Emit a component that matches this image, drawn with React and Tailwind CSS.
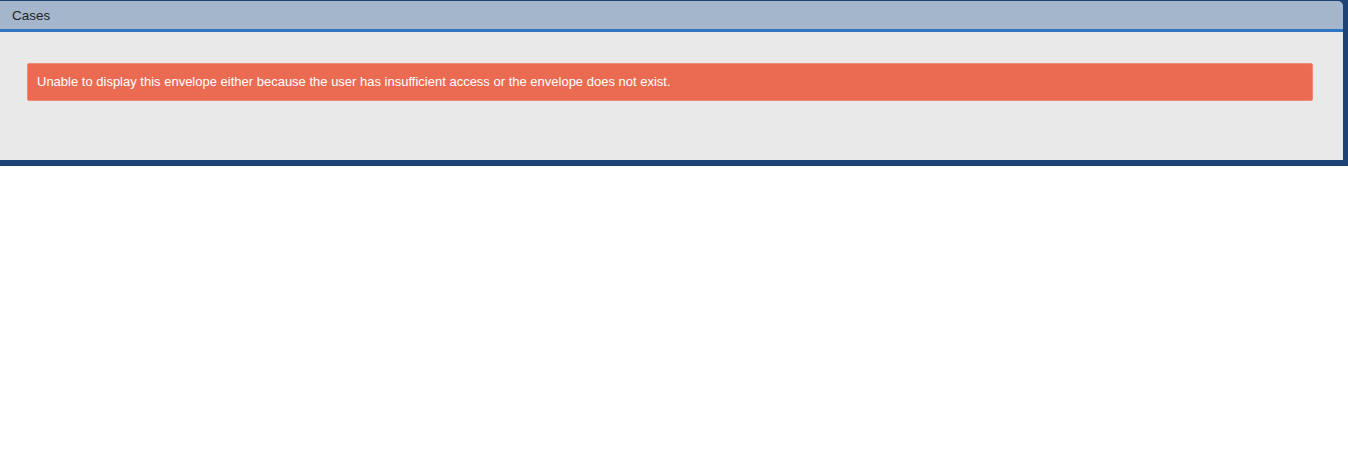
export default function App() {
  return (
    <div className="w-[1348px] bg-white" style={{ fontFamily: '"Liberation Sans", Arial, sans-serif' }}>
      <div className="bg-[#1d4274] pt-px pr-[5px] pb-[6px]">
        <div className="h-[28px] bg-[#a4b6cc] rounded-tr-[5px] flex items-center pl-[12px] pt-[2px] text-[13.5px] text-[#222]">
          Cases
        </div>
        <div className="h-[3px] bg-[#3074c2]" />
        <div className="bg-[#e9e9e9] h-[128px] pt-[31px] pl-[27px] pr-[30px]">
          <div className="h-[38px] bg-[#eb6b52] border border-[#f08a75] rounded-[2px] flex items-center pl-[9px] text-[13px] text-white">
            Unable to display this envelope either because the user has insufficient access or the envelope does not exist.
          </div>
        </div>
      </div>
    </div>
  );
}
